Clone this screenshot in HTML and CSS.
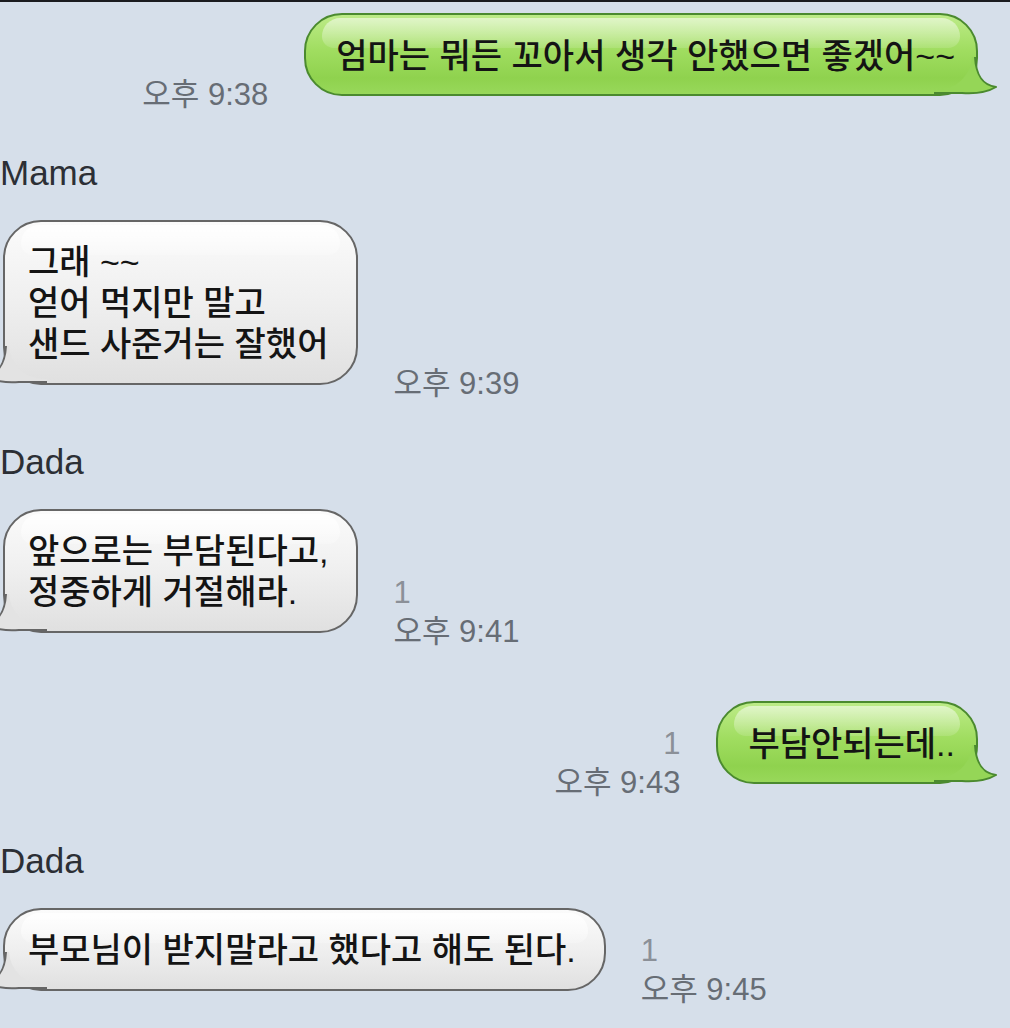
FILE: index.html
```html
<!DOCTYPE html>
<html lang="ko">
<head>
    <meta charset="UTF-8">
    <meta name="viewport" content="width=device-width, initial-scale=1.0">
    <title>대화</title>
    <link rel="stylesheet" href="styles.css">
</head>
<body>
    <div class="chat">
        <div class="row sent first">
            <div class="meta"><span class="time">오후 9:38</span></div>
            <div class="bubble green">엄마는 뭐든 꼬아서 생각 안했으면 좋겠어~~
                <svg class="tail" viewBox="0 0 72 44" width="72" height="44"><path class="tail-fill" d="M49 4C50 22 56 32 70 34C60 40 50 41 36 40L8 40L8 37L11 37A35 35 0 0 0 46 4Z"/><path class="tail-line" d="M49 4C50 22 56 32 70 34C60 40 50 41 36 40L8 40"/></svg>
            </div>
        </div>

        <div class="name">Mama</div>
        <div class="row recv">
            <div class="bubble gray">그래 ~~<br>얻어 먹지만 말고<br>샌드 사준거는 잘했어
                <svg class="tail" viewBox="0 0 72 44" width="72" height="44"><path class="tail-fill" d="M49 4C50 22 56 32 70 34C60 40 50 41 36 40L8 40L8 37L11 37A35 35 0 0 0 46 4Z"/><path class="tail-line" d="M49 4C50 22 56 32 70 34C60 40 50 41 36 40L8 40"/></svg>
            </div>
            <div class="meta"><span class="time">오후 9:39</span></div>
        </div>

        <div class="name">Dada</div>
        <div class="row recv">
            <div class="bubble gray">앞으로는 부담된다고,<br>정중하게 거절해라.
                <svg class="tail" viewBox="0 0 72 44" width="72" height="44"><path class="tail-fill" d="M49 4C50 22 56 32 70 34C60 40 50 41 36 40L8 40L8 37L11 37A35 35 0 0 0 46 4Z"/><path class="tail-line" d="M49 4C50 22 56 32 70 34C60 40 50 41 36 40L8 40"/></svg>
            </div>
            <div class="meta"><span class="read">1</span><span class="time">오후 9:41</span></div>
        </div>

        <div class="row sent spaced">
            <div class="meta"><span class="read">1</span><span class="time">오후 9:43</span></div>
            <div class="bubble green">부담안되는데..
                <svg class="tail" viewBox="0 0 72 44" width="72" height="44"><path class="tail-fill" d="M49 4C50 22 56 32 70 34C60 40 50 41 36 40L8 40L8 37L11 37A35 35 0 0 0 46 4Z"/><path class="tail-line" d="M49 4C50 22 56 32 70 34C60 40 50 41 36 40L8 40"/></svg>
            </div>
        </div>

        <div class="name">Dada</div>
        <div class="row recv">
            <div class="bubble gray">부모님이 받지말라고 했다고 해도 된다.
                <svg class="tail" viewBox="0 0 72 44" width="72" height="44"><path class="tail-fill" d="M49 4C50 22 56 32 70 34C60 40 50 41 36 40L8 40L8 37L11 37A35 35 0 0 0 46 4Z"/><path class="tail-line" d="M49 4C50 22 56 32 70 34C60 40 50 41 36 40L8 40"/></svg>
            </div>
            <div class="meta"><span class="read">1</span><span class="time">오후 9:45</span></div>
        </div>
    </div>
</body>
</html>
```
FILE: styles.css
```css
body {
    margin: 0;
    background-color: #d6dfea;
    border-top: 2px solid #1b1c1f;
    font-family: "Liberation Sans", "Noto Sans CJK KR", sans-serif;
    overflow: hidden;
    height: 1026px;
}

.row {
    display: flex;
    align-items: flex-end;
}

.row.sent {
    justify-content: flex-end;
    padding-right: 32px;
    gap: 36px;
}

.row.recv {
    padding-left: 3px;
    gap: 35px;
    margin-top: 27px;
}

.row.first {
    margin-top: 11px;
}

.row.spaced {
    margin-top: 68px;
}

.name {
    margin-top: 57px;
    font-size: 35px;
    line-height: 40px;
    color: #2c2f35;
}

.meta {
    display: flex;
    flex-direction: column;
    font-size: 31px;
    line-height: 39px;
    margin-bottom: -18px;
    white-space: nowrap;
}

.sent .meta {
    align-items: flex-end;
}

.read {
    color: #8b9098;
}

.time {
    color: #676d75;
}

.bubble {
    position: relative;
    z-index: 0;
    white-space: nowrap;
    font-size: 34px;
    font-weight: 500;
    line-height: 41px;
    color: #141414;
    border: 2px solid;
    border-radius: 38px;
}

.bubble::before {
    content: "";
    position: absolute;
    z-index: -1;
    left: 16px;
    right: 16px;
    top: 3px;
    height: 30px;
    border-radius: 22px 22px 14px 14px;
}

.bubble.gray {
    padding: 20px 28px 18px 23px;
    border-color: #666;
    background: linear-gradient(#fbfbfb, #efefef 50%, #e0e0e0);
}

.bubble.gray::before {
    background: linear-gradient(rgba(255,255,255,0.9), rgba(255,255,255,0.2));
}

.bubble.green {
    padding: 21px 21px 17px 30px;
    border-color: #4b8a2f;
    background: linear-gradient(#bdeb88, #a0dd60 45%, #8fd24e 80%, #98d85a);
}

.bubble.green::before {
    background: linear-gradient(rgba(255,255,255,0.55), rgba(255,255,255,0.12));
}

.tail {
    position: absolute;
    bottom: -3px;
}

.green .tail {
    right: -22px;
}

.gray .tail {
    left: -22px;
    transform: scaleX(-1);
}

.tail-line {
    fill: none;
    stroke-width: 2;
    stroke-linejoin: round;
}

.green .tail-fill {
    fill: #95d657;
}

.green .tail-line {
    stroke: #4b8a2f;
}

.gray .tail-fill {
    fill: #e3e3e3;
}

.gray .tail-line {
    stroke: #666;
}
```
